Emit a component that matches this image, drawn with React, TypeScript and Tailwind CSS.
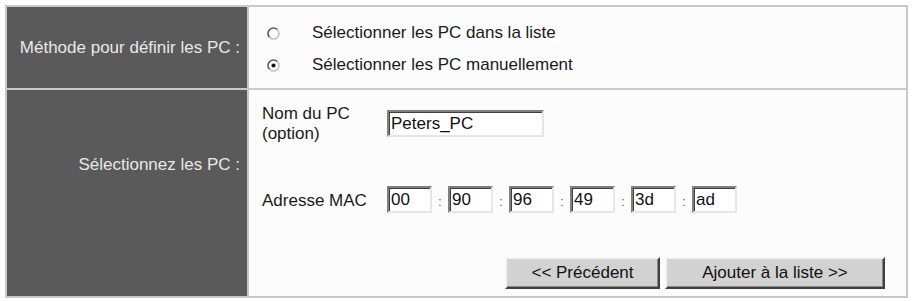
import React from "react";

const font = { fontFamily: "'Liberation Sans', Arial, Helvetica, sans-serif" };

function Radio({ checked }: { checked?: boolean }) {
  return (
    <svg width="13" height="13" viewBox="0 0 13 13" className="shrink-0">
      <circle cx="6.5" cy="6.5" r="5.5" fill="#ffffff" />
      <path d="M2.61 10.39 A5.5 5.5 0 0 1 10.39 2.61" fill="none" stroke="#5c5c5c" strokeWidth="1.6" />
      <path d="M10.39 2.61 A5.5 5.5 0 0 1 2.61 10.39" fill="none" stroke="#c4c4c4" strokeWidth="1.6" />
      {checked && <circle cx="6.5" cy="6.5" r="2.1" fill="#111111" />}
    </svg>
  );
}

function TextBox({ value, w }: { value: string; w: string }) {
  return (
    <div
      className={`${w} h-[27px] bg-white border-2 border-t-[#808080] border-l-[#808080] border-b-[#e6e6e6] border-r-[#e6e6e6] shadow-[inset_1px_1px_0_#404040] flex items-center pl-[2px] text-[17px] text-[#111] leading-none`}
    >
      {value}
    </div>
  );
}

function Colon() {
  return <div className="w-[16px] text-center text-[12px] text-[#555] pt-[6px]">:</div>;
}

function Btn({ label, w }: { label: string; w: string }) {
  return (
    <div
      className={`${w} h-[32px] bg-[#d2d2d2] border-2 border-t-[#f4f4f4] border-l-[#f4f4f4] border-b-[#404040] border-r-[#404040] shadow-[inset_-1px_-1px_0_#8a8a8a] flex items-center justify-center text-[17px] text-[#111]`}
    >
      {label}
    </div>
  );
}

export default function App() {
  const mac = ["00", "90", "96", "49", "3d", "ad"];
  return (
    <div className="w-[912px] h-[301px] bg-white pt-[5px] pl-[5px]" style={font}>
      <div className="w-[903px] bg-[#c8c8c8] p-[2px] grid grid-cols-[240px_657px] gap-[2px]">
        {/* Row 1 */}
        <div className="h-[81px] bg-[#5a5a5a] flex items-center justify-end pr-[7px] text-[17px] text-[#e8e8e8]">
          Méthode pour définir les PC :
        </div>
        <div className="h-[81px] bg-[#fcfcfc] pt-[10px] pl-[18px] text-[17px] text-[#1a1a1a]">
          <div className="h-[32px] flex items-center gap-[32px]">
            <Radio />
            <span>Sélectionner les PC dans la liste</span>
          </div>
          <div className="h-[32px] flex items-center gap-[32px]">
            <Radio checked />
            <span>Sélectionner les PC manuellement</span>
          </div>
        </div>

        {/* Row 2 */}
        <div className="h-[206px] bg-[#5a5a5a] text-[17px] text-[#e8e8e8]">
          <div className="h-[150px] flex items-center justify-end pr-[7px]">Sélectionnez les PC :</div>
        </div>
        <div className="h-[206px] bg-[#fcfcfc] pt-[14px] pl-[13px] text-[17px] text-[#1a1a1a]">
          <div className="flex items-start">
            <div className="w-[125px] leading-[20px]">
              Nom du PC
              <br />
              (option)
            </div>
            <div className="mt-[6px]">
              <TextBox value="Peters_PC" w="w-[157px]" />
            </div>
          </div>
          <div className="mt-[41px] flex items-center">
            <div className="w-[125px] pt-[3px]">Adresse MAC</div>
            {mac.map((m, i) => (
              <React.Fragment key={i}>
                {i > 0 && <Colon />}
                <TextBox value={m} w="w-[45px]" />
              </React.Fragment>
            ))}
          </div>
          <div className="mt-[43px] ml-[243px] flex gap-[5px]">
            <Btn label="<< Précédent" w="w-[155px]" />
            <Btn label="Ajouter à la liste >>" w="w-[220px]" />
          </div>
        </div>
      </div>
    </div>
  );
}
